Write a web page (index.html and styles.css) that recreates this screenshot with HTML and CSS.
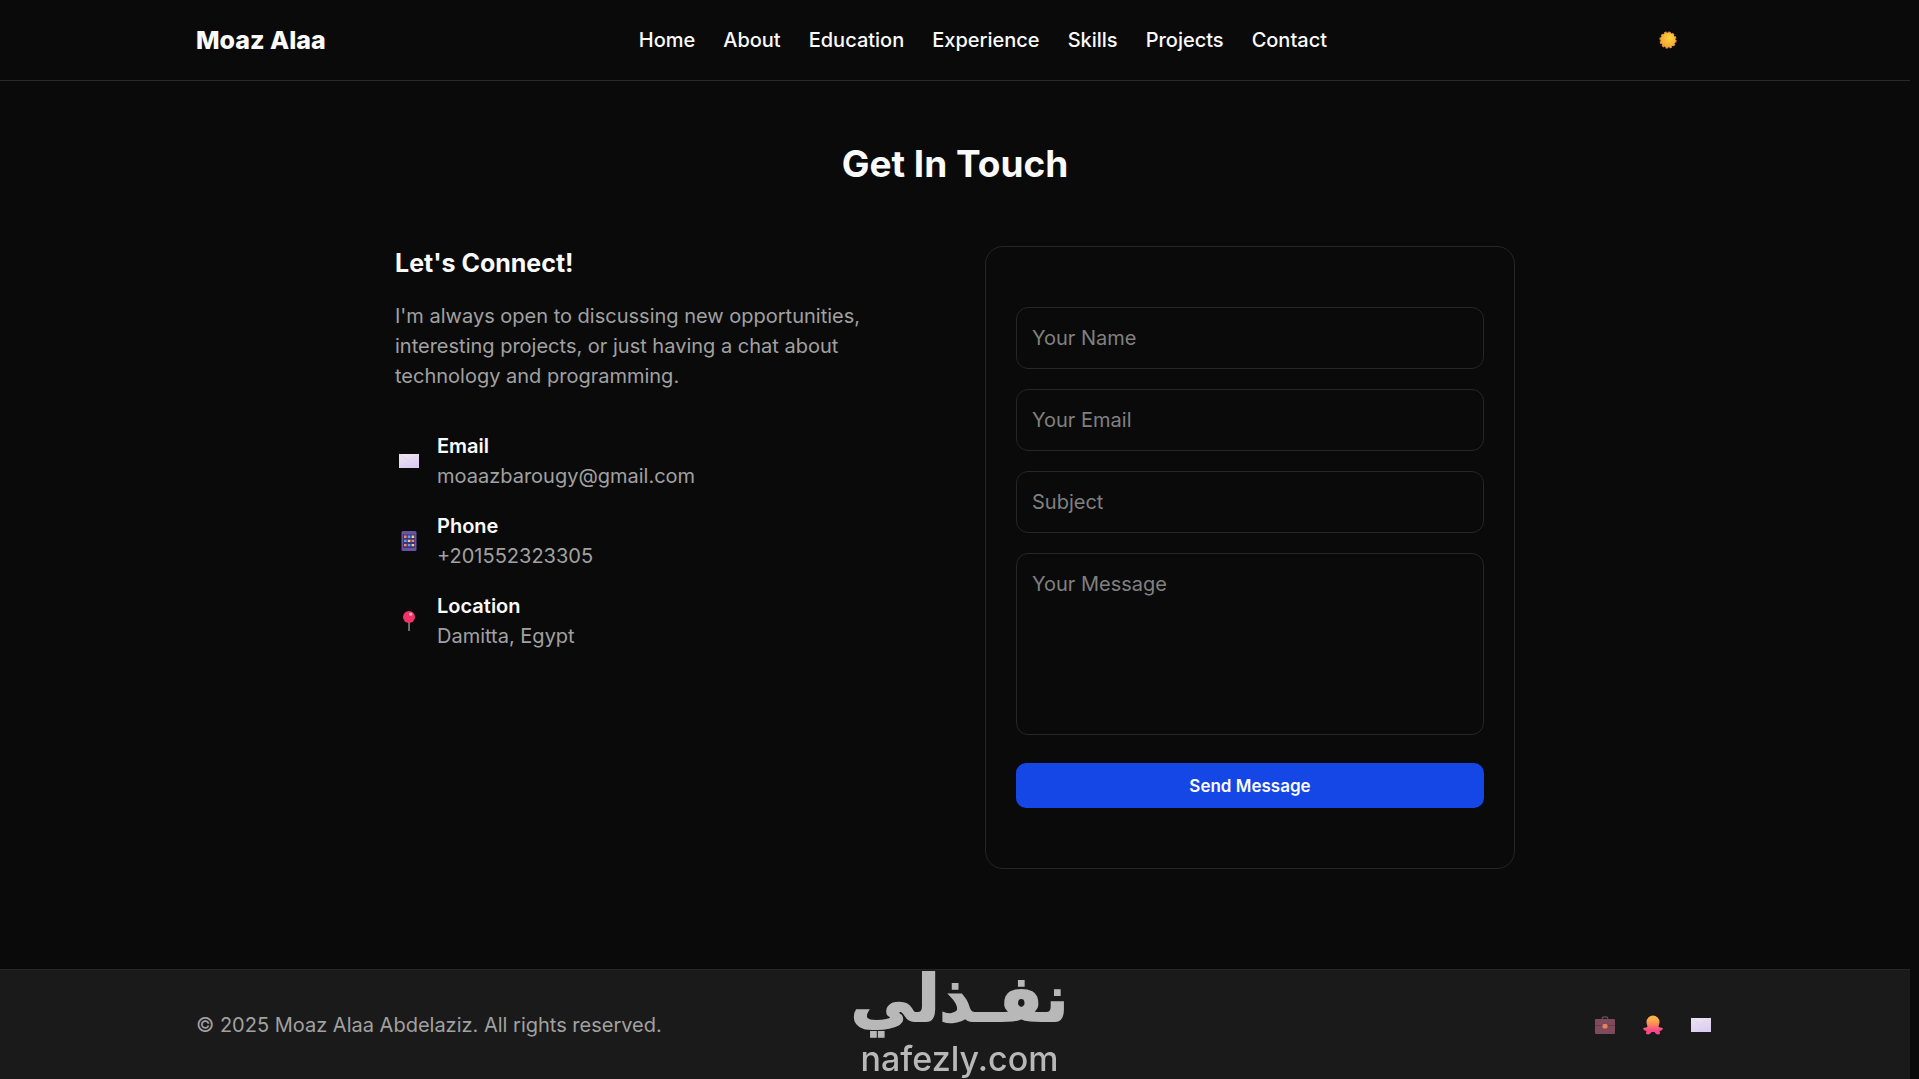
FILE: index.html
```html
<!DOCTYPE html>
<html lang="en">
<head>
    <meta charset="UTF-8">
    <meta name="viewport" content="width=device-width, initial-scale=1.0">
    <title>Moaz Alaa - Contact</title>
    <link rel="stylesheet" href="styles.css">
</head>
<body>
    <header class="navbar">
        <div class="container navbar-inner">
            <a href="#home" class="logo">Moaz Alaa</a>
            <nav class="nav-links">
                <a href="#home">Home</a>
                <a href="#about">About</a>
                <a href="#education">Education</a>
                <a href="#experience">Experience</a>
                <a href="#skills">Skills</a>
                <a href="#projects">Projects</a>
                <a href="#contact">Contact</a>
            </nav>
            <button class="theme-toggle" type="button" aria-label="Toggle theme">
                <svg class="icon" viewBox="0 0 20 20">
                    <defs>
                        <radialGradient id="sun" cx="0.6" cy="0.35" r="0.7">
                            <stop offset="0" stop-color="#ffd23c"/>
                            <stop offset="1" stop-color="#f0a034"/>
                        </radialGradient>
                    </defs>
                    <circle cx="10" cy="10" r="7.6" fill="none" stroke="#e8923a" stroke-width="2" stroke-dasharray="2.4 1.58"/>
                    <circle cx="10" cy="10" r="7.6" fill="url(#sun)"/>
                </svg>
            </button>
        </div>
    </header>

    <main class="contact" id="contact">
        <h1>Get In Touch</h1>
        <div class="contact-grid">
            <div class="contact-info">
                <h2>Let's Connect!</h2>
                <p class="intro">I'm always open to discussing new opportunities, interesting projects, or just having a chat about technology and programming.</p>
                <div class="info-item">
                    <svg class="icon" viewBox="0 0 20 20">
                        <defs>
                            <linearGradient id="paper" x1="0" y1="0" x2="0.4" y2="1">
                                <stop offset="0" stop-color="#efe6f0"/>
                                <stop offset="1" stop-color="#dccdf2"/>
                            </linearGradient>
                        </defs>
                        <rect y="3" width="20" height="14" fill="url(#paper)"/>
                        <path d="M0 3l8.5 6.2q1.5 1 3 0L20 3" fill="none" stroke="#e3d3e8" stroke-width="1"/>
                    </svg>
                    <div>
                        <h3>Email</h3>
                        <p>moaazbarougy@gmail.com</p>
                    </div>
                </div>
                <div class="info-item">
                    <svg class="icon" viewBox="0 0 20 20">
                        <rect x="2.5" width="15" height="20" rx="1.5" fill="#6654a3"/>
                        <rect x="4" y="3.5" width="12" height="13.500" fill="#43307a"/>
                        <path d="M5 4.500h2.600v2.400H5zM12.600 8.700h2.600v2.400h-2.600zM5 12.900h2.600v2.400H5z" fill="#f08a5c"/>
                        <path d="M8.800 4.500h2.600v2.400H8.800zM5 8.700h2.600v2.400H5zM8.800 12.900h2.600v2.400H8.800z" fill="#4aa8f0"/>
                        <path d="M12.600 4.500h2.600v2.400h-2.600zM8.800 8.700h2.600v2.400H8.800zM12.600 12.900h2.600v2.400h-2.600z" fill="#f5d079"/>
                    </svg>
                    <div>
                        <h3>Phone</h3>
                        <p>+201552323305</p>
                    </div>
                </div>
                <div class="info-item">
                    <svg class="icon" viewBox="0 0 20 20">
                        <rect x="9.3" y="10" width="1.5" height="10" fill="#8d8891"/>
                        <circle cx="10" cy="6" r="6" fill="#f0346a"/>
                        <circle cx="11.7" cy="3.2" r="1.6" fill="#ffa6bd"/>
                    </svg>
                    <div>
                        <h3>Location</h3>
                        <p>Damitta, Egypt</p>
                    </div>
                </div>
            </div>

            <form class="contact-form">
                <input type="text" name="name" placeholder="Your Name" aria-label="Your Name">
                <input type="email" name="email" placeholder="Your Email" aria-label="Your Email">
                <input type="text" name="subject" placeholder="Subject" aria-label="Subject">
                <textarea name="message" rows="5" placeholder="Your Message" aria-label="Your Message"></textarea>
                <button type="submit" class="send-btn">Send Message</button>
            </form>
        </div>
    </main>

    <footer class="footer">
        <div class="container footer-inner">
            <p>© 2025 Moaz Alaa Abdelaziz. All rights reserved.</p>
            <div class="social-links">
                <a href="#linkedin" aria-label="LinkedIn">
                    <svg class="icon" viewBox="0 0 20 20">
                        <path d="M7.3 4.5V3.2q0-1.200 1.200-1.200h3q1.200 0 1.200 1.200v1.300" fill="none" stroke="#5e4a52" stroke-width="1.3"/>
                        <rect y="4" width="20" height="15" rx="1" fill="#7f4a5c"/>
                        <path d="M0 10.500h20" stroke="#683b4f" stroke-width="1"/>
                        <rect x="7.5" y="9" width="5" height="4.5" rx="1.5" fill="#e8845c"/>
                    </svg>
                </a>
                <a href="#github" aria-label="GitHub">
                    <svg class="icon" viewBox="0 0 20 20">
                        <defs>
                            <linearGradient id="octo" x1="0" y1="0" x2="0" y2="1">
                                <stop offset="0.2" stop-color="#f9b04a"/>
                                <stop offset="0.55" stop-color="#fa7a62"/>
                                <stop offset="0.8" stop-color="#f8458e"/>
                            </linearGradient>
                        </defs>
                        <path d="M10 0.500a6.500 6.500 0 0 0-6.500 6.500c0 2 .8 3 1 4.500-.4 1.400-2.500 1-4.300 1.600.2 2.400 1.600 2.800 3.200 2.900-.2 1.200-.5 2-.2 3 2.200.9 4.300.2 5.200-2h3.200c.9 2.200 3 2.900 5.200 2 .3-1 0-1.800-.2-3 1.600-.1 3-.5 3.200-2.900-1.800-.6-3.900-.2-4.300-1.600.2-1.500 1-2.500 1-4.500A6.500 6.500 0 0 0 10 .5z" fill="url(#octo)"/>
                    </svg>
                </a>
                <a href="#mail" aria-label="Email">
                    <svg class="icon" viewBox="0 0 20 20">
                        <rect y="3" width="20" height="14" fill="url(#paper)"/>
                        <path d="M0 3l8.5 6.2q1.5 1 3 0L20 3" fill="none" stroke="#e3d3e8" stroke-width="1"/>
                    </svg>
                </a>
            </div>
        </div>
    </footer>

    <div class="watermark">
        <span class="watermark-ar" lang="ar" dir="rtl">نفـذلي</span>
        <span class="watermark-en">nafezly.com</span>
    </div>
</body>
</html>
```
FILE: styles.css
```css
* {
    box-sizing: border-box;
    margin: 0;
    padding: 0;
}

html {
    background-color: #0a0a0a;
}

body {
    font-family: Inter, "Liberation Sans", sans-serif;
    font-size: 20px;
    line-height: 30px;
    color: #fafafa;
    margin-right: 9px;
}

a {
    color: inherit;
    text-decoration: none;
}

.container {
    max-width: 1518px;
    margin: 0 auto;
    display: flex;
    align-items: center;
    justify-content: space-between;
}

.icon {
    display: block;
    width: 20px;
    height: 20px;
}

.navbar {
    border-bottom: 1px solid #2a2a2a;
}

.navbar-inner {
    height: 80px;
}

.logo {
    font-size: 25px;
    font-weight: 800;
}

.nav-links {
    display: flex;
    gap: 28px;
    font-weight: 500;
}

.theme-toggle {
    background: none;
    border: none;
    padding: 10px 36px 10px 18px;
    cursor: pointer;
}

.contact {
    max-width: 1120px;
    margin: 0 auto;
    padding: 60px 0 100px;
}

.contact h1 {
    font-size: 37px;
    line-height: 45px;
    font-weight: 700;
    text-align: center;
    margin-bottom: 60px;
}

.contact-grid {
    display: grid;
    grid-template-columns: 1fr 1fr;
    gap: 60px;
}

.contact-info h2 {
    font-size: 25px;
    line-height: 35px;
    font-weight: 700;
    margin-bottom: 20px;
}

.contact-info p {
    color: #a1a1a1;
}

.contact-info .intro {
    margin-bottom: 40px;
}

.info-item {
    display: flex;
    align-items: center;
    gap: 18px;
    padding-left: 4px;
    margin-bottom: 20px;
}

.info-item h3 {
    font-size: 20px;
    font-weight: 600;
}

.contact-form {
    display: flex;
    flex-direction: column;
    gap: 20px;
    padding: 60px 30px;
    border: 1px solid #262626;
    border-radius: 18px;
}

.contact-form input,
.contact-form textarea {
    width: 100%;
    height: 62px;
    padding: 15px;
    background-color: #0a0a0a;
    border: 1px solid #262626;
    border-radius: 12px;
    color: #fafafa;
    font: inherit;
}

.contact-form textarea {
    display: block;
    height: 182px;
    margin-bottom: 8px;
    resize: none;
}

.contact-form ::placeholder {
    color: #808080;
}

.send-btn {
    height: 45px;
    background-color: #1447e6;
    color: #fafafa;
    border: none;
    border-radius: 10px;
    font-family: inherit;
    font-size: 17px;
    font-weight: 600;
    cursor: pointer;
}

.footer {
    background-color: #1a1a1a;
    border-top: 1px solid #262626;
    padding: 40px 0;
    color: #a1a1a1;
}

.social-links {
    display: flex;
    gap: 28px;
    padding-right: 3px;
}

.watermark {
    position: fixed;
    left: 0;
    right: 0;
    bottom: 0;
    display: flex;
    flex-direction: column;
    align-items: center;
    color: #b8b8b8;
    pointer-events: none;
}

.watermark-ar {
    font-family: "DejaVu Sans", sans-serif;
    font-size: 64px;
    font-weight: 700;
    line-height: 80px;
    -webkit-text-stroke: 2px #b8b8b8;
}

.watermark-en {
    font-size: 34px;
    font-weight: 500;
    line-height: 40px;
}
```
